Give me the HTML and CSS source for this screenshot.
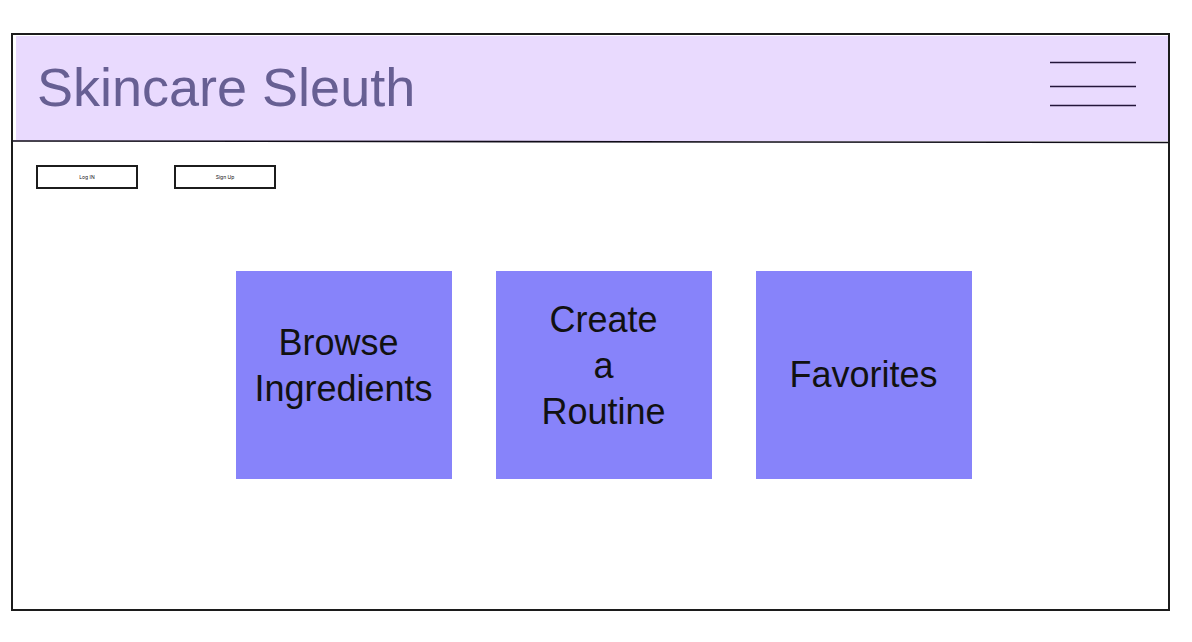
FILE: index.html
```html
<!DOCTYPE html>
<html lang="en">
<head>
  <meta charset="utf-8">
  <meta name="viewport" content="width=device-width, initial-scale=1">
  <title>Skincare Sleuth</title>
  <link rel="stylesheet" href="styles.css">
</head>
<body>
  <div class="frame">
    <header class="banner">
      <h1 class="title">Skincare Sleuth</h1>
      <button class="menu" type="button" aria-label="Menu">
        <svg class="menu-icon" viewBox="0 0 86 52" aria-hidden="true">
          <path d="M0 1.5H86M0 25.5H86M0 44.5H86" fill="none" stroke="#24163a" stroke-width="1.6"/>
        </svg>
      </button>
    </header>
    <svg class="divider" viewBox="0 0 1156 4" preserveAspectRatio="none" aria-hidden="true">
      <path d="M0 1L1156 2.5" fill="none" stroke="#100c18" stroke-width="1.6"/>
    </svg>
    <nav class="account" aria-label="Account">
      <button class="account-button" type="button">Log IN</button>
      <button class="account-button" type="button">Sign Up</button>
    </nav>
    <main class="cards">
      <a class="card card-tall" href="#browse">Browse 
Ingredients</a>
      <a class="card card-tall" href="#routine">Create
a
Routine</a>
      <a class="card" href="#favorites">Favorites</a>
    </main>
  </div>
</body>
</html>
```

FILE: styles.css
```css
* {
  box-sizing: border-box;
}

body {
  margin: 0;
  padding: 33px 22px 31px 11px;
  background: #fff;
  color: #111;
  font-family: "Liberation Sans", Arial, sans-serif;
}

.frame {
  display: flex;
  flex-direction: column;
  min-height: calc(100vh - 64px);
  border: 2px solid #1c1c1c;
}

.banner {
  display: flex;
  align-items: center;
  justify-content: space-between;
  margin: 1px 0 0 3px;
  padding: 21px 32px 23px 21px;
  background: #e9dafe;
}

.title {
  margin: 0;
  color: #675f93;
  font-size: 54px;
  font-weight: 400;
  line-height: 60px;
}

.menu {
  padding: 0;
  border: 0;
  background: none;
  cursor: pointer;
}

.menu-icon {
  display: block;
  width: 86px;
  height: 52px;
}

.divider {
  display: block;
  width: 100%;
  height: 4px;
  background: linear-gradient(#e9dafe 1px, transparent 1px);
}

.account {
  display: flex;
  gap: 36px;
  padding: 21px 23px 0;
}

.account-button {
  width: 102px;
  height: 24px;
  padding: 0;
  border: 2px solid #1c1c1c;
  background: #fff;
  color: #111;
  font-family: Inter, sans-serif;
  font-size: 5px;
  cursor: pointer;
}

.cards {
  display: flex;
  justify-content: center;
  flex-wrap: wrap;
  gap: 44px;
  padding: 82px 0 48px 26px;
}

.card {
  display: flex;
  align-items: center;
  justify-content: center;
  width: 216px;
  height: 208px;
  background: #8783fa;
  color: #111;
  font-size: 36px;
  line-height: 46px;
  text-align: center;
  text-decoration: none;
  white-space: pre;
}

.card-tall {
  padding-bottom: 18px;
}
```
